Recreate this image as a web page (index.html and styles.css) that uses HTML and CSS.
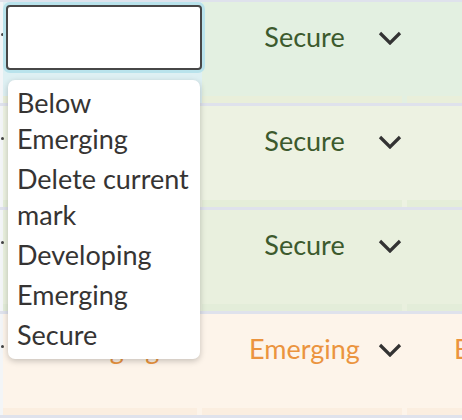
FILE: index.html
```html
<!DOCTYPE html>
<html lang="en">
<head>
<meta charset="utf-8">
<title>Marks</title>
<link rel="stylesheet" href="styles.css">
</head>
<body>
<div class="grid">
  <div class="row row-mint">
    <div class="lead"><span class="dot"></span></div>
    <div class="cell cell-focus"><div class="select focused"></div><div class="strip"></div></div>
    <div class="cell"><div class="select secure">Secure<svg class="chev" viewBox="0 0 24 14"><path d="M2 2 L12 12 L22 2"/></svg></div><div class="strip"></div></div>
    <div class="cell"><div class="select secure">Secure<svg class="chev" viewBox="0 0 24 14"><path d="M2 2 L12 12 L22 2"/></svg></div><div class="strip"></div></div>
  </div>
  <div class="row row-lime">
    <div class="lead"><span class="dot"></span></div>
    <div class="cell"><div class="select secure">Secure</div><div class="strip"></div></div>
    <div class="cell"><div class="select secure">Secure<svg class="chev" viewBox="0 0 24 14"><path d="M2 2 L12 12 L22 2"/></svg></div><div class="strip"></div></div>
    <div class="cell"><div class="select secure">Secure<svg class="chev" viewBox="0 0 24 14"><path d="M2 2 L12 12 L22 2"/></svg></div><div class="strip"></div></div>
  </div>
  <div class="row row-sage">
    <div class="lead"><span class="dot"></span></div>
    <div class="cell"><div class="select secure">Secure</div><div class="strip"></div></div>
    <div class="cell"><div class="select secure">Secure<svg class="chev" viewBox="0 0 24 14"><path d="M2 2 L12 12 L22 2"/></svg></div><div class="strip"></div></div>
    <div class="cell"><div class="select secure">Secure<svg class="chev" viewBox="0 0 24 14"><path d="M2 2 L12 12 L22 2"/></svg></div><div class="strip"></div></div>
  </div>
  <div class="row row-cream">
    <div class="lead"><span class="dot"></span></div>
    <div class="cell"><div class="select emerging">Emerging</div><div class="strip"></div></div>
    <div class="cell"><div class="select emerging">Emerging<svg class="chev" viewBox="0 0 24 14"><path d="M2 2 L12 12 L22 2"/></svg></div><div class="strip"></div></div>
    <div class="cell"><div class="select emerging">Emerging<svg class="chev" viewBox="0 0 24 14"><path d="M2 2 L12 12 L22 2"/></svg></div><div class="strip"></div></div>
  </div>
</div>
<ul class="menu">
  <li>Below Emerging</li>
  <li>Delete current mark</li>
  <li>Developing</li>
  <li>Emerging</li>
  <li>Secure</li>
</ul>
</body>
</html>
```

FILE: styles.css
```css
html, body {
  margin: 0;
  padding: 0;
  background: #ffffff;
  overflow: hidden;
}
body {
  font-family: Lato, "Liberation Sans", sans-serif;
  width: 462px;
  height: 420px;
  position: relative;
}
.grid {
  border-top: 2px solid #dfe2ec;
  width: 620px;
}
.row {
  display: grid;
  grid-template-columns: 3px 199px 205px 205px;
  height: 101px;
  border-bottom: 3px solid #dfe2ec;
}
.row-mint { background: #e3f0e1; }
.row-mint .strip { background: #e9efda; }
.row-lime { background: #edf2e2; }
.row-lime .strip { background: #e5eed9; }
.row-sage { background: #e9f0de; }
.row-sage .strip { background: #e3edd9; }
.row-cream { background: #fdf4ea; }
.row-cream .strip { background: #fbeee0; }

.lead {
  background: #f3f5f7;
  position: relative;
}
.dot {
  position: absolute;
  left: 1px;
  top: 31px;
  width: 3px;
  height: 3px;
  border-radius: 50%;
  background: #444;
}
.cell {
  display: flex;
  flex-direction: column;
  justify-content: space-between;
}
.cell-focus {
  background: #def0f3;
}
.select {
  position: relative;
  height: 65px;
  margin: 3px 4px 0 4px;
  padding-bottom: 3px;
  display: flex;
  align-items: center;
  justify-content: center;
  font-size: 27px;
  box-sizing: border-box;
}
.cell:nth-child(2) .select {
  margin-left: 3px;
  margin-right: 0;
}
.focused {
  background: #ffffff;
  border: 2px solid #474747;
  border-radius: 4px;
  box-shadow: 0 0 0 3px #b9e3ec;
}
.secure { color: #3c5a2d; }
.emerging { color: #eb943f; }
.chev {
  position: absolute;
  right: 1px;
  top: 26px;
  width: 24px;
  height: 14px;
  fill: none;
  stroke: #333333;
  stroke-width: 3.2;
}
.strip {
  height: 7px;
  margin-right: 5px;
}
.menu {
  position: absolute;
  z-index: 10;
  left: 8px;
  top: 80px;
  width: 192px;
  margin: 0;
  padding: 3px 0 4px;
  list-style: none;
  background: #ffffff;
  border-radius: 7px;
  box-shadow: 0 2px 6px rgba(0, 0, 0, 0.22);
  font-size: 27px;
  line-height: 36px;
  color: #363433;
  box-sizing: border-box;
}
.menu li {
  padding: 2px 9px;
}
```
